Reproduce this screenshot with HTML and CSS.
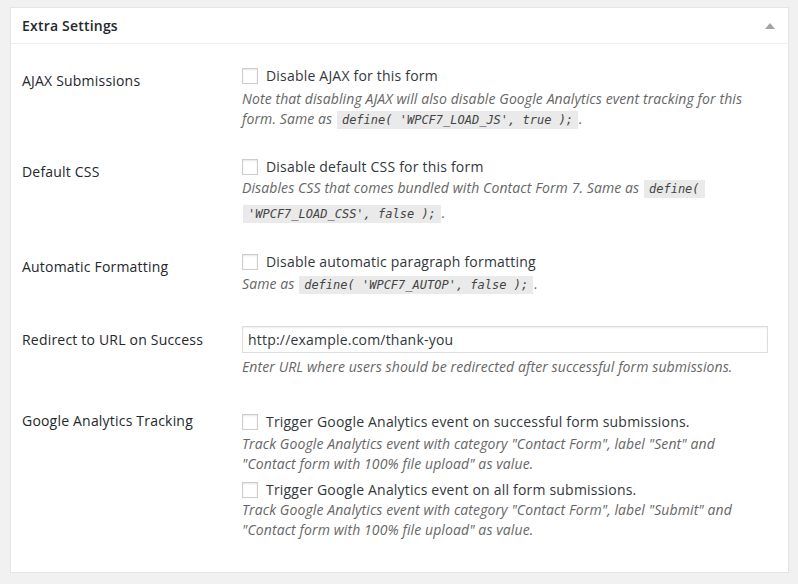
FILE: index.html
```html
<!DOCTYPE html>
<html>
<head>
<meta charset="utf-8">
<link rel="stylesheet" href="styles.css">
</head>
<body>
<div class="postbox">
  <div class="hndle">
    <h2 class="title">Extra Settings</h2>
    <span class="toggle"></span>
  </div>
  <div class="inside">
    <div class="row r1">
      <div class="th">AJAX Submissions</div>
      <div class="td">
        <label class="cb"><span class="box"></span>Disable AJAX for this form</label>
        <p class="desc">Note that disabling AJAX will also disable Google Analytics event tracking for this form. Same as <code>define( 'WPCF7_LOAD_JS', true );</code>.</p>
      </div>
    </div>
    <div class="row r2">
      <div class="th">Default CSS</div>
      <div class="td">
        <label class="cb"><span class="box"></span>Disable default CSS for this form</label>
        <p class="desc code-lines">Disables CSS that comes bundled with Contact Form 7. Same as <code>define(</code><br><code>'WPCF7_LOAD_CSS', false );</code>.</p>
      </div>
    </div>
    <div class="row r3">
      <div class="th">Automatic Formatting</div>
      <div class="td">
        <label class="cb"><span class="box"></span>Disable automatic paragraph formatting</label>
        <p class="desc">Same as <code>define( 'WPCF7_AUTOP', false );</code>.</p>
      </div>
    </div>
    <div class="row r4">
      <div class="th">Redirect to URL on Success</div>
      <div class="td">
        <input class="url" type="text" value="http://example.com/thank-you">
        <p class="desc">Enter URL where users should be redirected after successful form submissions.</p>
      </div>
    </div>
    <div class="row r5">
      <div class="th">Google Analytics Tracking</div>
      <div class="td">
        <label class="cb"><span class="box"></span>Trigger Google Analytics event on successful form submissions.</label>
        <p class="desc">Track Google Analytics event with category "Contact Form", label "Sent" and<br>"Contact form with 100% file upload" as value.</p>
        <label class="cb cb2"><span class="box"></span>Trigger Google Analytics event on all form submissions.</label>
        <p class="desc last">Track Google Analytics event with category "Contact Form", label "Submit" and<br>"Contact form with 100% file upload" as value.</p>
      </div>
    </div>
  </div>
</div>
</body>
</html>
```
FILE: styles.css
```css
html, body {
  margin: 0;
  padding: 0;
  background: #f1f1f1;
}
body {
  padding: 7px 9px 0 10px;
  font-family: "Open Sans", sans-serif;
  color: #23282d;
  font-size: 14px;
  letter-spacing: 0.2px;
}
.postbox {
  background: #fff;
  border: 1px solid #e5e5e5;
  box-shadow: 0 1px 1px rgba(0,0,0,0.04);
  height: 566px;
  box-sizing: border-box;
}
.hndle {
  display: flex;
  align-items: center;
  justify-content: space-between;
  height: 35px;
  border-bottom: 1px solid #eee;
  padding: 0 13px 0 11px;
}
.title {
  margin: 0;
  font-size: 14px;
  font-weight: 600;
  line-height: 1.4;
  color: #23282d;
}
.toggle {
  width: 0;
  height: 0;
  border-left: 5px solid transparent;
  border-right: 5px solid transparent;
  border-bottom: 6px solid #a0a5aa;
  margin-top: 1px;
}
.inside {
  padding: 8px 20px 0 11px;
}
.row {
  display: flex;
  box-sizing: border-box;
}
.th {
  width: 220px;
  flex: none;
  line-height: 18px;
  padding-top: 20px;
  color: #23282d;
}
.td {
  flex: 1;
  padding-top: 15px;
}
.r1 { height: 91px; }
.r2 { height: 95px; }
.r3 { height: 73px; }
.r4 { height: 81px; }
.r5 .td { padding-top: 21px; }
.cb {
  display: flex;
  align-items: center;
  line-height: 18px;
  color: #32373c;
}
.box {
  width: 14px;
  height: 14px;
  border: 1px solid #ccc;
  box-shadow: inset 0 1px 2px rgba(0,0,0,0.1);
  margin-right: 8px;
  flex: none;
}
.desc {
  margin: 4px 0 0;
  font-size: 14px;
  font-style: italic;
  color: #666;
  line-height: 19.5px;
  letter-spacing: 0.1px;
}
code {
  font-family: "DejaVu Sans Mono", monospace;
  font-size: 12px;
  letter-spacing: 0;
  background: #eaeaea;
  padding: 2px 5px 2px;
  margin: 0 1px;
  color: #444;
}
.desc.code-lines {
  line-height: 23px;
  margin-top: 0;
}
.r3 .desc { margin-top: 3px; }
.url {
  display: block;
  box-sizing: border-box;
  width: 526px;
  height: 27px;
  border: 1px solid #ddd;
  box-shadow: inset 0 1px 2px rgba(0,0,0,0.07);
  font-family: "Open Sans", sans-serif;
  font-size: 14px;
  letter-spacing: 0.2px;
  color: #32373c;
  padding: 0 5px;
  margin: 0;
  outline: none;
}
.r4 .desc { margin-top: 4px; }
.r5 .desc { margin-top: 3px; }
.cb2 { margin-top: 8px; }
.r5 .desc.last { margin-top: 1px; }
```
